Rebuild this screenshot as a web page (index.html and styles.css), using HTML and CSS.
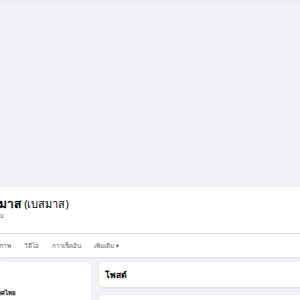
FILE: index.html
```html
<!DOCTYPE html>
<html lang="th">
<head>
<meta charset="utf-8">
<link rel="stylesheet" href="styles.css">
</head>
<body>
<div class="cover"></div>
<header class="head">
  <div class="id">
    <h1 class="name">เบสมาส <span class="alt">(เบสมาส)</span></h1>
    <div class="sub">ม</div>
  </div>
  <nav class="tabs">
    <span>โพสต์</span><span>เกี่ยวกับ</span><span>รูปภาพ</span><span>วิดีโอ</span><span>การเช็คอิน</span><span>เพิ่มเติม ▾</span>
  </nav>
</header>
<main class="body">
  <section class="left card">
    <div class="intro">แนะนำตัว</div>
    <div class="line">เพจ · ประเทศไทย</div>
  </section>
  <section class="right">
    <div class="card posts">โพสต์</div>
    <div class="card composer"></div>
  </section>
</main>
</body>
</html>
```
FILE: styles.css
```css
* { box-sizing: border-box; }
html, body { margin: 0; }
body {
  background: #f0f2f5;
  font-family: "Noto Sans", "Noto Sans CJK SC", "DejaVu Sans", sans-serif;
  color: #050505;
  overflow: hidden;
  width: 300px;
  height: 300px;
}
.cover {
  height: 187px;
  background: linear-gradient(#e9eaee 0, #f0f1f5 6px, #f0f1f5 100%);
}
.head {
  background: #fff;
  height: 70px;
  box-shadow: 0 1px 2px rgba(0,0,0,0.08);
}
.id {
  margin-left: -20px;
  padding-top: 9px;
  height: 47px;
  border-bottom: 1px solid #dadde1;
}
.name {
  margin: 0;
  font-size: 12px;
  line-height: 16px;
  font-weight: 700;
}
.alt { font-weight: 400; font-size: 11px; }
.sub {
  font-size: 6px;
  line-height: 9px;
  color: #65676b;
  margin-left: 20px;
}
.tabs {
  display: flex;
  gap: 13px;
  margin-left: -71px;
  height: 24px;
  align-items: center;
  font-size: 6.3px;
  color: #65676b;
  font-weight: 500;
  white-space: nowrap;
}
.body {
  display: flex;
  gap: 8px;
  padding-top: 5px;
}
.card {
  background: #fff;
  border-radius: 5px;
  box-shadow: 0 1px 2px rgba(0,0,0,0.1);
}
.left {
  width: 101px;
  height: 60px;
  margin-left: -10px;
  border-radius: 0 5px 0 0;
  padding: 9px 0 0 0;
}
.intro { font-size: 8px; font-weight: 700; visibility: hidden; height: 12px; }
.line {
  font-size: 6px;
  font-weight: 700;
  margin-left: -20px;
  margin-top: 5px;
}
.right {
  flex: 1;
  display: flex;
  flex-direction: column;
  gap: 8px;
}
.posts {
  height: 25px;
  padding: 1px 6px 0;
  display: flex;
  align-items: center;
  font-size: 8.5px;
  font-weight: 700;
  border-radius: 5px 0 0 5px;
}
.composer { height: 30px; border-radius: 5px 0 0 0; }
```
